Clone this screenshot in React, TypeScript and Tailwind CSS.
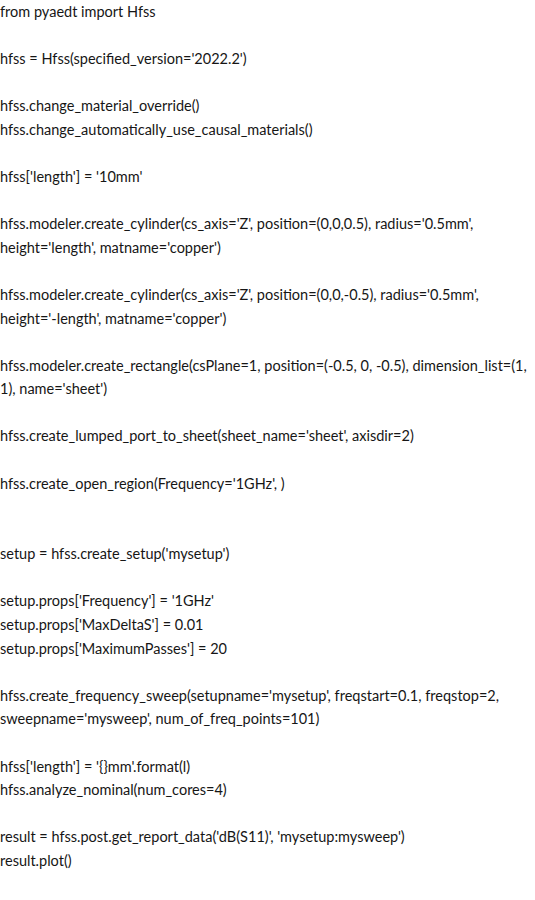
import React from 'react';

const lines: string[] = [
  'from pyaedt import Hfss',
  '',
  "hfss = Hfss(specified_version='2022.2')",
  '',
  'hfss.change_material_override()',
  'hfss.change_automatically_use_causal_materials()',
  '',
  "hfss['length'] = '10mm'",
  '',
  "hfss.modeler.create_cylinder(cs_axis='Z', position=(0,0,0.5), radius='0.5mm',",
  "height='length', matname='copper')",
  '',
  "hfss.modeler.create_cylinder(cs_axis='Z', position=(0,0,-0.5), radius='0.5mm',",
  "height='-length', matname='copper')",
  '',
  'hfss.modeler.create_rectangle(csPlane=1, position=(-0.5, 0, -0.5), dimension_list=(1,',
  "1), name='sheet')",
  '',
  "hfss.create_lumped_port_to_sheet(sheet_name='sheet', axisdir=2)",
  '',
  "hfss.create_open_region(Frequency='1GHz', )",
  '',
  '',
  "setup = hfss.create_setup('mysetup')",
  '',
  "setup.props['Frequency'] = '1GHz'",
  "setup.props['MaxDeltaS'] = 0.01",
  "setup.props['MaximumPasses'] = 20",
  '',
  "hfss.create_frequency_sweep(setupname='mysetup', freqstart=0.1, freqstop=2,",
  "sweepname='mysweep', num_of_freq_points=101)",
  '',
  "hfss['length'] = '{}mm'.format(l)",
  'hfss.analyze_nominal(num_cores=4)',
  '',
  "result = hfss.post.get_report_data('dB(S11)', 'mysetup:mysweep')",
  'result.plot()',
];

export default function App() {
  return (
    <div className="w-[535px] h-[900px] bg-white overflow-hidden">
      <div className="font-['Lato',sans-serif] text-[14.5px] leading-[23.58px] text-[#161616]">
        {lines.map((line, i) => (
          <div key={i} className="h-[23.58px] whitespace-pre">
            {line || ' '}
          </div>
        ))}
      </div>
    </div>
  );
}
